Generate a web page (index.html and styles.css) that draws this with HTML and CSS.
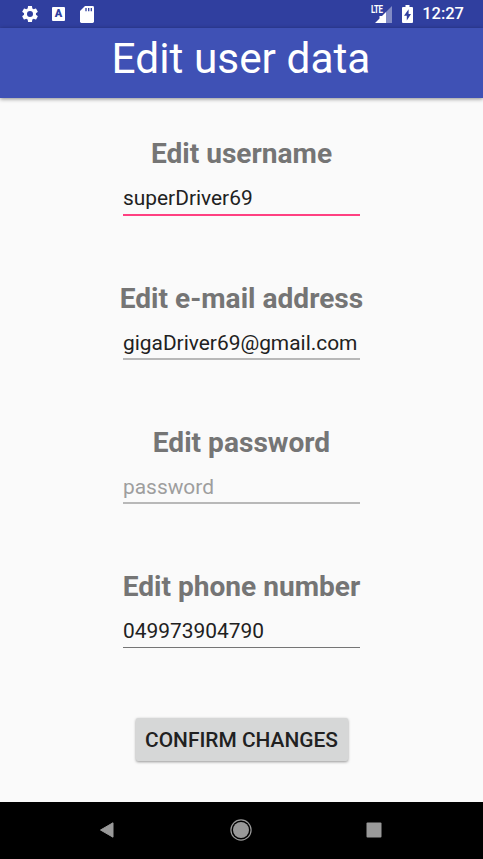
FILE: index.html
```html
<!DOCTYPE html>
<html lang="en">
<head>
<meta charset="utf-8">
<title>Edit user data</title>
<link rel="stylesheet" href="styles.css">
</head>
<body>
<div class="status">
  <svg class="gear" width="20" height="20" viewBox="0 0 24 24" fill="currentColor"><path d="M19.14 12.94c.04-.3.06-.61.06-.94 0-.32-.02-.64-.07-.94l2.03-1.58c.18-.14.23-.41.12-.61l-1.92-3.32c-.12-.22-.37-.29-.59-.22l-2.39.96c-.5-.38-1.03-.7-1.62-.94L14.4 2.81c-.04-.24-.24-.41-.48-.41h-3.84c-.24 0-.43.17-.47.41L9.25 5.35c-.59.24-1.13.57-1.62.94l-2.39-.96c-.22-.08-.47 0-.59.22L2.74 8.87c-.12.21-.08.47.12.61l2.03 1.58c-.05.3-.09.63-.09.94s.02.64.07.94l-2.03 1.58c-.18.14-.23.41-.12.61l1.92 3.32c.12.22.37.29.59.22l2.39-.96c.5.38 1.03.7 1.62.94l.36 2.54c.05.24.24.41.48.41h3.84c.24 0 .44-.17.47-.41l.36-2.54c.59-.24 1.13-.56 1.62-.94l2.39.96c.22.08.47 0 .59-.22l1.92-3.32c.12-.22.07-.47-.12-.61l-2.01-1.58zM12 15.6A3.6 3.6 0 1 1 12 8.4a3.6 3.6 0 0 1 0 7.2z"/></svg>
  <span class="keyboard">A</span>
  <svg class="card" width="14" height="17" viewBox="0 0 14 17"><path fill="#fff" d="M5 0h7.6Q14 0 14 1.4v14.2q0 1.4-1.4 1.4H1.4Q0 17 0 15.6V5z"/><path stroke="#303f9f" stroke-width="1.3" d="M6 2v3.2M8.7 2v3.2M11.3 2v3.2"/></svg>
  <span class="spacer"></span>
  <div class="signal">
    <svg width="17" height="17" viewBox="0 0 17 17"><path fill="#fff" fill-opacity=".4" d="M17 0v17H11V6z"/><path fill="#fff" d="M11 6v11H0L4.500 12.500V10H7z"/></svg>
    <span class="lte">LTE</span>
  </div>
  <svg class="battery" width="11" height="18" viewBox="0 0 11 18"><path fill="#fff" d="M3.500 0h4v2H10q1 0 1 1v14q0 1-1 1H1q-1 0-1-1V3q0-1 1-1h2.500z"/><path fill="#303f9f" d="M6.600 4.300 2 10.700h2.800v4.800L9 9.100H6.600z"/></svg>
  <span class="time">12:27</span>
</div>
<header class="bar"><h1>Edit user data</h1></header>
<main class="form">
  <label class="field"><span class="label">Edit username</span><input class="input focused" type="text" value="superDriver69"></label>
  <label class="field"><span class="label">Edit e-mail address</span><input class="input" type="text" value="gigaDriver69@gmail.com"></label>
  <label class="field"><span class="label">Edit password</span><input class="input" type="password" placeholder="password"></label>
  <label class="field"><span class="label">Edit phone number</span><input class="input thin" type="text" value="049973904790"></label>
  <button class="confirm">CONFIRM CHANGES</button>
</main>
<nav class="nav">
  <svg width="16" height="18" viewBox="0 0 16 18"><path fill="#999" stroke="#999" stroke-linejoin="round" d="M1.500 9 14 1.800v14.400z"/></svg>
  <svg width="22" height="22" viewBox="0 0 22 22"><circle cx="11" cy="11" r="10.100" fill="none" stroke="#999" stroke-width="1.200"/><circle cx="11" cy="11" r="8" fill="#999"/></svg>
  <svg width="16" height="16" viewBox="0 0 16 16"><rect x=".5" y=".5" width="15" height="15" rx="1" fill="#999"/></svg>
</nav>
</body>
</html>
```
FILE: styles.css
```css
* { box-sizing: border-box; }

body {
  margin: 0;
  height: 859px;
  display: flex;
  flex-direction: column;
  overflow: hidden;
  background: #fafafa;
  font-family: Roboto, "Liberation Sans", sans-serif;
}

svg { display: block; flex: none; }

.status {
  height: 28px;
  flex: none;
  display: flex;
  align-items: center;
  padding: 0 19px 0 20px;
  background: #303f9f;
  color: #fff;
}

.keyboard {
  width: 13px;
  height: 14px;
  margin-left: 12px;
  border-radius: 1px;
  background: #fff;
  color: #303f9f;
  font-size: 11px;
  font-weight: 900;
  line-height: 14px;
  text-align: center;
}

.card { margin-left: 14.5px; }

.spacer { flex: 1; }

.signal { position: relative; margin-right: 10px; }

.lte {
  position: absolute;
  left: -4px;
  top: -1px;
  font-size: 10.5px;
  font-weight: 700;
  line-height: 9px;
  letter-spacing: -0.5px;
  transform: scaleX(0.75);
  transform-origin: left;
}

.battery { margin-right: 9px; }

.time {
  font-size: 16.5px;
  font-weight: 500;
  line-height: 28px;
}

.bar {
  height: 70px;
  flex: none;
  background: #3f51b5;
  box-shadow: 0 1px 4px rgba(0, 0, 0, 0.45);
  color: #fff;
  text-align: center;
}

h1 {
  margin: 0;
  padding: 6px 1px 0 0;
  font-size: 42.4px;
  font-weight: 400;
  line-height: 50px;
}

.form {
  flex: 1;
  display: flex;
  flex-direction: column;
  align-items: center;
  padding-top: 39.3px;
}

.field {
  height: 144.3px;
  flex: none;
  display: flex;
  flex-direction: column;
  align-items: center;
}

.label {
  color: #757575;
  font-size: 28.1px;
  font-weight: 700;
  line-height: 33px;
  white-space: nowrap;
}

.input {
  width: 237px;
  height: 30px;
  margin-top: 15px;
  padding: 1px 0 2px;
  border: 0;
  border-bottom: 2px solid #b8b8b8;
  outline: 0;
  background: none;
  color: #212121;
  font: 400 20.9px/25px Roboto, "Liberation Sans", sans-serif;
}

.input::placeholder { color: #9e9e9e; opacity: 1; }

.input.focused {
  height: 30.5px;
  padding: 0 0 3.5px;
  border-bottom-color: #ff4081;
}

.input.thin {
  padding: 0 0 4px;
  border-bottom: 1px solid #757575;
}

.confirm {
  width: 212px;
  height: 43px;
  margin-top: 4px;
  padding: 2px 0 0;
  border: 0;
  border-radius: 2px;
  background: #d6d7d7;
  box-shadow: 0 1px 3px rgba(0, 0, 0, 0.4);
  color: #212121;
  font: 500 20.9px/41px Roboto, "Liberation Sans", sans-serif;
  white-space: nowrap;
}

.nav {
  height: 57px;
  flex: none;
  display: flex;
  align-items: center;
  justify-content: space-between;
  padding: 0 101px 1px 99px;
  background: #000;
}
```
